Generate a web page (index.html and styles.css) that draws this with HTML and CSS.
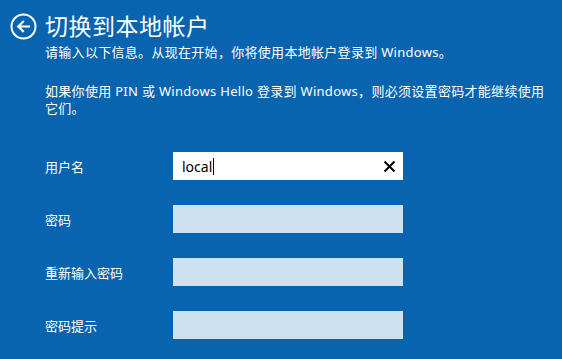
FILE: index.html
```html
<!DOCTYPE html>
<html>
<head>
    <title>切换到本地帐户</title>
    <link rel="stylesheet" href="styles.css">
</head>
<body>
    <div class="page">
        <div class="header">
            <svg class="back-icon" width="27" height="27" viewBox="0 0 27 27">
                <circle cx="13.5" cy="13.5" r="12" fill="none" stroke="#fff" stroke-width="2"/>
                <path d="M19 13.5 H8.5 M13 8.8 L8.3 13.5 L13 18.2" fill="none" stroke="#fff" stroke-width="2.2" stroke-linecap="square"/>
            </svg>
            <h1>切换到本地帐户</h1>
        </div>

        <div class="content">
            <p class="intro">请输入以下信息。从现在开始，你将使用本地帐户登录到 Windows。</p>
            <p class="note">如果你使用 PIN 或 Windows Hello 登录到 Windows，则必须设置密码才能继续使用它们。</p>

            <div class="form">
                <div class="row">
                    <label>用户名</label>
                    <div class="field active">
                        <span class="value">local</span><span class="caret"></span>
                        <svg class="clear" width="13" height="13" viewBox="0 0 13 13">
                            <path d="M1.5 1.5 L11.5 11.5 M11.5 1.5 L1.5 11.5" stroke="#000" stroke-width="2"/>
                        </svg>
                    </div>
                </div>
                <div class="row">
                    <label>密码</label>
                    <div class="field"></div>
                </div>
                <div class="row">
                    <label>重新输入密码</label>
                    <div class="field"></div>
                </div>
                <div class="row">
                    <label>密码提示</label>
                    <div class="field"></div>
                </div>
            </div>
        </div>
    </div>
</body>
</html>
```

FILE: styles.css
```css
body {
    margin: 0;
    background: #0964b0;
    color: #fff;
    font-family: "Noto Sans", "Noto Sans CJK SC", sans-serif;
    width: 562px;
    height: 359px;
    overflow: hidden;
}
.page {
    padding: 12px 0 0 10px;
}
.header {
    display: flex;
    align-items: center;
    height: 28px;
}
.back-icon {
    flex: none;
    margin-right: 8px;
}
h1 {
    margin: 0;
    font-size: 23px;
    font-weight: normal;
    line-height: 28px;
    letter-spacing: 0.5px;
}
.content {
    padding-left: 35px;
}
.content p {
    margin: 0;
    font-size: 13px;
    line-height: 17px;
    letter-spacing: 0.3px;
}
.intro {
    margin-top: 4px !important;
}
.note {
    margin-top: 22px !important;
    width: 502px;
}
.form {
    margin-top: 35px;
    display: flex;
    flex-direction: column;
    gap: 25px;
}
.row {
    display: flex;
    align-items: center;
}
.row label {
    width: 128px;
    font-size: 13px;
}
.field {
    width: 230px;
    height: 28px;
    background: #cde1f1;
    display: flex;
    align-items: center;
    padding: 0 7px 0 9px;
    box-sizing: border-box;
}
.field.active {
    background: #fff;
    color: #000;
}
.value {
    font-size: 14px;
}
.caret {
    width: 1px;
    height: 17px;
    background: #000;
    margin-left: 1px;
}
.clear {
    margin-left: auto;
}
```
